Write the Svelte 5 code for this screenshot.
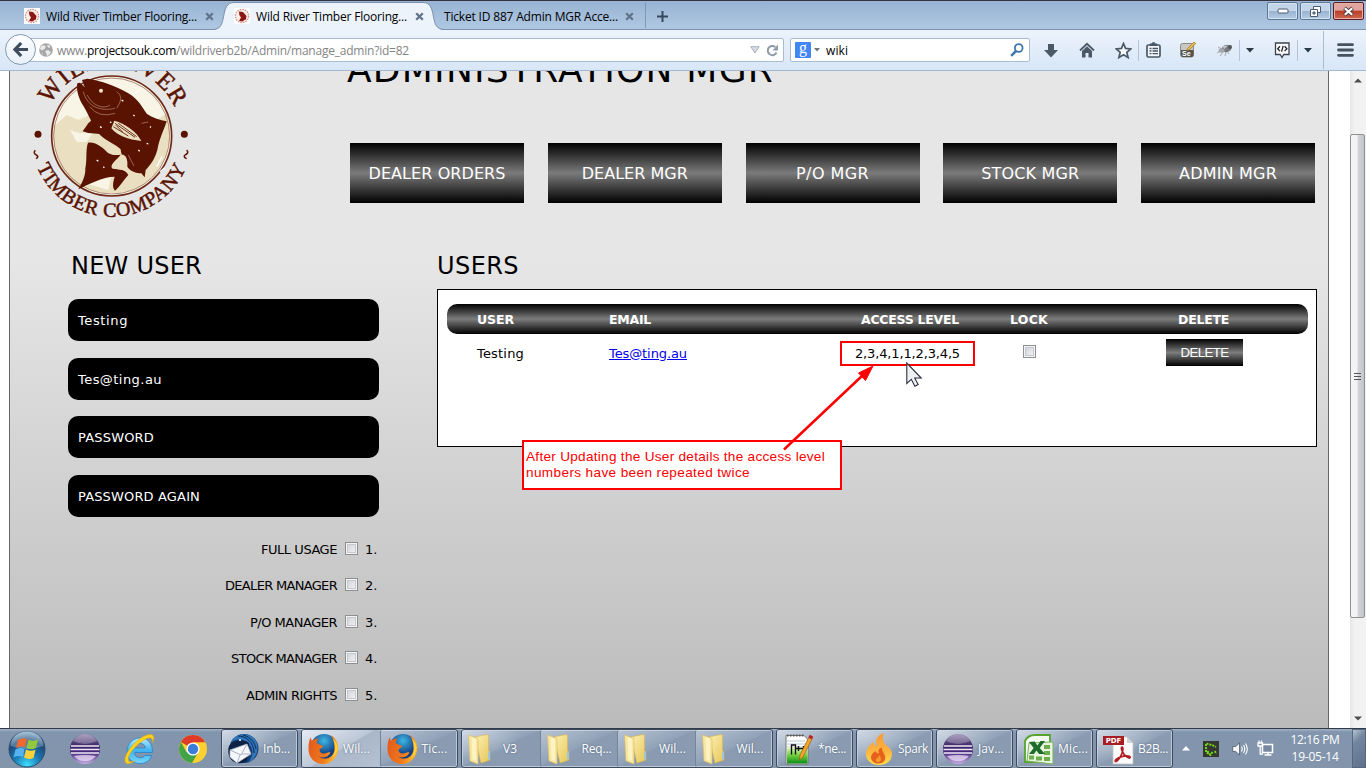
<script>
  // Spreads letters so that a label takes exactly the given width.
  function fit(node, width) {
    node.style.letterSpacing = '0px';
    const natural = node.getBoundingClientRect().width;
    const count = node.textContent.length;
    node.style.letterSpacing = (width - natural) / count + 'px';
  }

  const nav = [
    ['DEALER ORDERS', 137], ['DEALER MGR', 106], ['P/O MGR', 73], ['STOCK MGR', 98], ['ADMIN MGR', 98]
  ];
  const fields = [['Testing', 50], ['Tes@ting.au', 84], ['PASSWORD', 76], ['PASSWORD AGAIN', 122]];
  const rights = [['FULL USAGE', 76], ['DEALER MANAGER', 112], ['P/O MANAGER', 87], ['STOCK MANAGER', 106], ['ADMIN RIGHTS', 91]];
  const groups = [
    [{ icon: 'mail', label: 'Inb...', w: 27, lit: false }],
    [{ icon: 'fox', label: 'Wil...', w: 27, lit: true }, { icon: 'fox', label: 'Tic...', w: 26 }],
    [
      { icon: 'folder', label: 'V3', w: 14 }, { icon: 'folder', label: 'Req...', w: 30 },
      { icon: 'folder', label: 'Wil...', w: 27 }, { icon: 'folder', label: 'Wil...', w: 27 }
    ],
    [{ icon: 'note', label: '*ne...', w: 28 }],
    [{ icon: 'spark', label: 'Spark', w: 30 }],
    [{ icon: 'eclipse', label: 'Jav...', w: 26 }],
    [{ icon: 'excel', label: 'Mic...', w: 30 }],
    [{ icon: 'pdf', label: 'B2B...', w: 30 }]
  ];
</script>

{#snippet favicon()}
  <svg class="fav" width="16" height="16" viewBox="0 0 16 16">
    <rect width="16" height="16" fill="#fff" />
    <circle cx="8" cy="8" r="6.6" fill="#f8efe9" stroke="#d49a92" stroke-width="1.4" stroke-dasharray="1.6 1" />
    <path d="M5 3.500 9 4l3.500 4-.6 3.500-1.500.5-2 1.500L5 13l2-3.500L5.300 7z" fill="#8d1612" />
  </svg>
{/snippet}

{#snippet closeX()}
  <svg class="x" width="9" height="9" viewBox="0 0 9 9"><path d="M1.200 1.200 7.800 7.800M7.800 1.200 1.200 7.800" stroke="#60738a" stroke-width="2.300" /></svg>
{/snippet}

{#snippet caret()}
  <svg width="8" height="5" viewBox="0 0 8 5"><path d="M0 0h8L4 4.600z" fill="#2a3a47" /></svg>
{/snippet}

{#snippet appIcon(name)}
  <svg class="app" width="32" height="32" viewBox="0 0 32 32">
    {#if name === 'eclipse'}
      <circle cx="16" cy="16" r="15" fill="url(#gEcl)" />
      <path d="M4 8A14 14 0 0 1 28 8Q16 14 4 8z" fill="#fff" opacity=".25" />
      <path d="M2 13h28M1.500 16.500h29M2 20h28" stroke="#efeaf8" stroke-width="1.500" />
      <path d="M5 23Q16 21 27 23A14 14 0 0 1 5 23z" fill="#e9dff7" opacity=".75" />
    {:else if name === 'ie'}
      <path d="M29.500 19.500H11.500C12 23 14 24.800 17.300 24.800c2.200 0 3.500-.8 4.400-2.300h7C27 27.500 23 30.500 17 30.500 9.500 30.500 4 25.400 4 18.200S9.800 5 17 5C25 5 30 11 29.500 19.500zM11.700 15h10.600c-.4-3-2.200-4.600-5.200-4.600S12.400 12 11.700 15z" fill="url(#gIe)" stroke="#2384c6" stroke-width=".8" />
      <path d="M3 30C-2 25 12 5 25 1.800c7-1.600 6.500 4 4.500 8 .7-4-1-6-5-4.500C15 9 3.500 22 5.500 27.500c1 2.300 4 1.500 6.500.3C8 30.500 4.500 31.500 3 30z" fill="#ffd21c" stroke="#e3a900" stroke-width=".5" />
    {:else if name === 'chrome'}
      <circle cx="16" cy="16" r="14" fill="#fcd02f" />
      <path d="M16 16 3.900 9A14 14 0 0 1 28.200 9.200H16z" fill="#de3b2b" />
      <path d="M3.900 9A14 14 0 0 0 15 30l6.200-10.500L16 16 9.500 19z" fill="#42a446" />
      <circle cx="16" cy="16" r="6.600" fill="#fff" /><circle cx="16" cy="16" r="5.200" fill="#3b7ddb" />
    {:else if name === 'mail'}
      <circle cx="17" cy="15.500" r="14.500" fill="#173c72" />
      <path d="M4 9C9-1 24-1 29 8c4 9 0 18-8 22 5-7 6-13 1-19C18 6 11 5 4 9z" fill="#2f75b7" />
      <path d="M11 3c8 0 16 6 16 17M16 2c8 2 12 8 13 14" stroke="#0e2b5c" stroke-width="1" fill="none" />
      <path d="M2 13c4-6 14-7 20-3l-2 18c-8 5-16 1-18-5-1-4-1-7 0-10z" fill="#0f2346" />
      <path d="m3 17 17-6 4 10-14 9-7-6z" fill="#f6f7fa" stroke="#b9bfcc" stroke-width=".7" />
      <path d="m3 17 11 5 6-11M10 30l3-8M24 21l-9 0" stroke="#aab2c2" stroke-width="1" fill="none" />
      <circle cx="13" cy="7" r="1" fill="#fff" />
    {:else if name === 'fox'}
      <circle cx="17" cy="14.500" r="13.500" fill="url(#gFoxBlue)" />
      <path d="M24 2c6 4 8 10 7 16-2 9-9 13.500-16 13C7 30.500 1.500 24 1.500 16c0-5 .5-8 2-11.500L5 8c2-2 4-2.500 6-2.500C10 7.500 9.500 9 10 10.500l6 2.500c-.5 2-3 2.500-3.500 3.500 0 3 2 4.500 5 4 3-.5 4-1.500 6-1-2 5-9 6.500-13 3 6 6 17 3 17-7 0-5-1-9-3.500-13.500z" fill="url(#gFox)" />
      <path d="M26 6c3 5 4 14-2 19 7-3 9-13 2-19z" fill="#ffd83a" />
    {:else if name === 'folder'}
      <path d="m8 4 12-2.500 1.500 1V18L23 19v8l-9 3z" fill="url(#gFolder)" stroke="#d9b74e" stroke-width=".6" />
      <path d="m1.500 2 9.500 3.500V31L3 28z" fill="#f7e6a0" stroke="#dcbf62" stroke-width=".7" />
      <path d="m4.500 4 4.500 2v22l-3.500-1.500z" fill="#fdf3c2" />
      <path d="M22 19v7.500" stroke="#8fc6f0" stroke-width="1.700" />
    {:else if name === 'note'}
      <path d="M4 2.500h18l4 4v24.500H4z" fill="#fff" stroke="#777" />
      <path d="M5 8h18M5 11h20M5 14h20" stroke="#b6c7d6" stroke-width="1" />
      <rect x="5" y="14" width="20.500" height="16.500" fill="url(#gNote)" />
      <path d="M5 2.500h17" stroke="#555" stroke-width="2" stroke-dasharray="1.500 1.500" />
      <path d="M9.500 21.500V12h4v9.500M14 15.500h5M16.500 13v5M19 15.500h5M21.500 13v5" stroke="#111" stroke-width="1.400" fill="none" />
      <path d="m28 2 3 2-10 20-3.500 3L18 22z" fill="#f0a52b" stroke="#9a5c14" stroke-width=".7" /><path d="m28 2 3 1.500-1.500 3-3-2z" fill="#b72036" />
    {:else if name === 'spark'}
      <path d="M22 0C13 3 13.500 9 15 14c-2-1-3-3-3.500-5-4.500 3-8 8-7.500 13C4.500 28 10 32 17 32s13-4 13-11c0-6-5-7-7.500-11C20.500 7 20.500 4 22 0z" fill="url(#gSpark)" />
      <path d="M20 14.500c-4 1-4 4-3 6-2 0-3-1-3.500-2.500-3 2-5 4.500-4.500 7.500 1 3.500 4.500 5.500 8.500 5 4-.5 6.500-3.500 5.500-7.500-.7-3-3-4-3-8.500z" fill="#e8611c" />
      <path d="M17 22c0 3-4 3-3 6 1 2 5 1 5-1.500 0-2-1-3-2-4.500z" fill="#f39b2d" />
    {:else if name === 'excel'}
      <path d="M3 8Q6 2 13 2h15v27H3z" fill="#f5faf0" stroke="#57a332" stroke-width="1.800" />
      <path d="M7 10 31 9v22L5 28z" fill="#e9f4e1" stroke="#79b35b" />
      <path d="M22 12h6v4h-6zM22 18h6v4h-6zM22 24h6v4h-6zM14 23.500h6v4h-6zM7 22.500h5v4H7z" fill="#6cae4b" />
      <path d="m7 9 5.500-.5 3 4 3-4.500 4.500 0-5.300 7L23 21h-6l-2.600-3.500L12 21H7l4.700-6z" fill="#1c6b2b" />
    {:else}
      <path d="M11 4h14l6 6v21H11z" fill="#fbfbfb" stroke="#c2c2c2" stroke-width=".8" /><path d="m25 4 6 6h-6z" fill="#cfd3d6" />
      <rect x="1" y="3" width="21" height="9" fill="#a81c23" />
      <text x="11.500" y="10" class="pdftext">PDF</text>
      <path d="M20 14c1.500 0 1 4-.5 7.500C18 25 15 29 13.500 28.500c-1.700-1 3-4.500 8-5.300 4-.6 7 0 6.700 1.300-.6 1.600-4.500-.6-6.700-4C20 18 18.500 14.500 20 14z" fill="none" stroke="#b11f24" stroke-width="1.700" />
    {/if}
  </svg>
{/snippet}

<svg class="defs" width="0" height="0">
  <defs>
    <linearGradient id="gEcl" x2="0" y2="1"><stop offset="0" stop-color="#9283ab" /><stop offset=".4" stop-color="#3a2464" /><stop offset=".62" stop-color="#48277c" /><stop offset="1" stop-color="#c6aee4" /></linearGradient>
    <linearGradient id="gIe" x2="0" y2="1"><stop offset="0" stop-color="#b8ecff" /><stop offset=".5" stop-color="#3fb0ef" /><stop offset="1" stop-color="#79d7fb" /></linearGradient>
    <radialGradient id="gFoxBlue" cx=".5" cy=".25"><stop offset="0" stop-color="#3db7e4" /><stop offset="1" stop-color="#153f83" /></radialGradient>
    <linearGradient id="gFox" x2="1" y2=".3"><stop offset="0" stop-color="#e3561b" /><stop offset=".7" stop-color="#ef7b1d" /><stop offset="1" stop-color="#fcb22b" /></linearGradient>
    <linearGradient id="gFolder" x2="1" y2="1"><stop offset="0" stop-color="#fbf0b5" /><stop offset="1" stop-color="#e7c656" /></linearGradient>
    <linearGradient id="gNote" x2="0" y2="1"><stop offset="0" stop-color="#e9fbd0" /><stop offset=".5" stop-color="#6fd13c" /><stop offset="1" stop-color="#0f8a1a" /></linearGradient>
    <linearGradient id="gSpark" x2="0" y2="1"><stop offset="0" stop-color="#f79a35" /><stop offset=".6" stop-color="#fcb640" /><stop offset="1" stop-color="#fde04a" /></linearGradient>
    <radialGradient id="gOrb" cx=".5" cy=".95" r=".9"><stop offset="0" stop-color="#3fe0ff" /><stop offset=".4" stop-color="#1b7bb5" /><stop offset=".75" stop-color="#1d4a78" /><stop offset="1" stop-color="#7fa6c6" /></radialGradient>
  </defs>
</svg>

<div class="screen">
  <div class="tabs">
    <div class="tab first">{@render favicon()}<span class="t" use:fit={151}>Wild River Timber Flooring...</span>{@render closeX()}</div>
    <div class="tab active">
      <svg class="shape" width="232" height="28" viewBox="0 0 232 28">
        <path d="M0 28C8 27.500 9 22 10.500 15 12 6 14 .5 21 .5H210C217 .5 219 6 220.500 15 222 22 223 27.500 231 28z" fill="#edf3fb" />
        <path d="M0 27.500C8 27 9 22 10.500 15 12 6 14 .5 21 .5H210C217 .5 219 6 220.500 15 222 22 223 27 231 27.500" fill="none" stroke="#7a91ad" />
      </svg>
      {@render favicon()}<span class="t" use:fit={151}>Wild River Timber Flooring...</span>{@render closeX()}
    </div>
    <div class="tab last"><span class="t" use:fit={174}>Ticket ID 887 Admin MGR Acce...</span>{@render closeX()}</div>
    <svg class="plus" width="11" height="11" viewBox="0 0 11 11"><path d="M5.500 0v11M0 5.500h11" stroke="#37485a" stroke-width="2" /></svg>
    <div class="win">
      <div class="wb"><svg width="12" height="6" viewBox="0 0 12 6"><rect x="1" y="1" width="10" height="4" rx="1" fill="#fff" stroke="#4b5b70" /></svg></div>
      <div class="wb"><svg width="13" height="13" viewBox="0 0 13 13"><path d="M4.500 1.500h7v6h-7z" fill="#fff" stroke="#4b5b70" /><path d="M1.500 4.500h7v7h-7z" fill="#fff" stroke="#4b5b70" /><path d="M4 7h2v2H4z" fill="#8fa9c8" stroke="#4b5b70" /></svg></div>
      <div class="wb red"><svg width="13" height="11" viewBox="0 0 13 11"><path d="m2.500 2 8 7M10.500 2l-8 7" stroke="#4d3d46" stroke-width="4" /><path d="m2.800 2.200 7.400 6.600M10.200 2.200 2.800 8.800" stroke="#fff" stroke-width="2.200" /></svg></div>
    </div>
  </div>

  <div class="toolbar">
    <div class="back"><svg width="16" height="15" viewBox="0 0 16 15"><path d="M8.200 1 2 7.500l6.200 6.500M2.500 7.500H15" fill="none" stroke="#3f4e5f" stroke-width="3.200" /></svg></div>
    <div class="url">
      <svg width="14" height="14" viewBox="0 0 14 14"><circle cx="7" cy="7" r="6.800" fill="#a5a5a5" /><path d="M2 3c3-2 4 0 5 .5L5.500 6 3 7.500 1 6zM8.500 1.500l3 1.500-1 2-2-1zM6 8l3-1 3 2-2 3-2 1-1-3zM2 9l2 2v1z" fill="#e9e9e9" /></svg>
      <span class="addr"><span class="g" use:fit={30}>www.</span><b use:fit={89}>projectsouk.com</b><span class="g" use:fit={233}>/wildriverb2b/Admin/manage_admin?id=82</span></span>
      <svg width="10" height="8" viewBox="0 0 10 8"><path d="M.8.700h8.400L5 7z" fill="#d9dde3" stroke="#a9b1bb" /></svg>
      <svg class="reload" width="13" height="13" viewBox="0 0 13 13"><path d="M10.500 8.500A4.600 4.600 0 1 1 9.300 3" fill="none" stroke="#8d9aa8" stroke-width="2" /><path d="M12 .5v6H6.500z" fill="#8d9aa8" /></svg>
    </div>
    <div class="search">
      <span class="goog">g</span>
      <svg width="6" height="4" viewBox="0 0 6 4"><path d="M0 0h6L3 3.500z" fill="#6c7680" /></svg>
      <span class="q" use:fit={22}>wiki</span>
      <svg class="mag" width="14" height="14" viewBox="0 0 14 14"><circle cx="8.700" cy="5" r="3.900" fill="none" stroke="#3f78ac" stroke-width="1.800" /><path d="M6 8 1.200 12.800" stroke="#3f78ac" stroke-width="2.500" /></svg>
    </div>
    <div class="tools">
      <svg width="14" height="15" viewBox="0 0 14 15"><path d="M4 1h6v6h4l-7 7.500L0 7h4z" fill="#4b5966" /></svg>
      <svg width="16" height="16" viewBox="0 0 16 16"><path d="M1 8.500 8 1.800l7 6.700" fill="none" stroke="#4b5966" stroke-width="1.800" /><path d="m3 9 5-4.800L13 9v6.500H9.500V11h-3v4.500H3z" fill="#4b5966" /></svg>
      <svg width="17" height="17" viewBox="0 0 17 17"><path d="m8.500 1.500 2 4.900 5.300.5-4 3.400 1.300 5.200-4.600-2.700-4.600 2.700 1.300-5.200-4-3.400 5.300-.5z" fill="#f7fbff" stroke="#4b5966" stroke-width="1.700" /></svg>
      <i></i>
      <svg width="15" height="16" viewBox="0 0 15 16"><rect x="1" y="3" width="13" height="12" rx="1.500" fill="#f3f7fb" stroke="#4b5966" stroke-width="1.700" /><path d="M4 3.500V2h2a1.500 1.500 0 0 1 3 0h2v1.500z" fill="#4b5966" stroke="#4b5966" /><path d="M3.500 6.500h2M6.500 6.500h5.500M3.500 9h2M6.500 9h5.500M3.500 11.700h2M6.500 11.700h5.500" stroke="#4b5966" stroke-width="1.300" /></svg>
      <svg width="16" height="16" viewBox="0 0 16 16"><rect x=".5" y="1.500" width="13" height="13.500" rx="2" fill="#c9c7c1" stroke="#8c8a85" /><path d="M1 8h12.500v5a2 2 0 0 1-2 2H3a2 2 0 0 1-2-2z" fill="#55534f" /><text x="2" y="14" class="se">Se</text><path d="m14 0 1.800 1.500L9 8l-2.200.6L7.500 6.500z" fill="#efb84c" stroke="#8c6a2a" stroke-width=".6" /></svg>
      <svg width="17" height="14" viewBox="0 0 17 14"><path d="M1 10 5 8M4 13l3-4M9 13l1-4M13 11l-2-3M2 4l4 2M15 7l-3 0" stroke="#999" stroke-width=".8" /><ellipse cx="10.500" cy="5.500" rx="5" ry="3.600" fill="#777b80" transform="rotate(-15 10.500 5.500)" /><ellipse cx="5.500" cy="7.500" rx="3" ry="2.200" fill="#a5a9ad" /><circle cx="14" cy="4" r="2" fill="#50565c" /><path d="m6 3 6-.5L8.500 6z" fill="#c2c6ca" /></svg>
      <i></i>
      {@render caret()}
      <svg width="17" height="17" viewBox="0 0 17 17"><path d="M1.500 1h13.500v11.500H9.700L8 15.500l-1.800-3H1.500z" fill="#fdfdfd" stroke="#3a444e" stroke-width="1.300" /><path d="M6 4.300 3.700 6.700 6 9.100M10.600 4.300l2.300 2.400-2.300 2.400M9.200 3.800 7.600 9.700" fill="none" stroke="#1c2329" stroke-width="1.300" /></svg>
      <i></i>
      {@render caret()}
      <i class="tall"></i>
      <svg width="17" height="14" viewBox="0 0 17 14"><path d="M1.500 1.700h14M1.500 7h14M1.500 12.300h14" stroke="#46535f" stroke-width="2.800" stroke-linecap="round" /></svg>
    </div>
  </div>

  <div class="viewport">
    <main class="page">
      <header>
        <svg class="logo" width="230" height="159" viewBox="30 33 690 477">
          <defs>
            <path id="arcTop" d="M152 134A206 206 0 0 1 526 148" />
            <path id="arcBottom" d="M111 321A243 243 0 0 0 559 321" />
          </defs>
          <circle cx="335" cy="228" r="178" fill="#f8f4e6" />
          <path d="M160 200 200 165 235 180 270 165 380 230 470 180 500 160C525 240 500 330 420 380 370 405 270 415 205 350 175 320 155 250 160 200z" fill="#eadfc0" />
          <path d="M210 210l30 10 40-4-20 30-30 0zM255 370l80-30-10 50z" fill="#f8f4e6" />
          <circle cx="335" cy="228" r="180" fill="none" stroke="#6d2a18" stroke-width="5" />
          <circle cx="335" cy="228" r="174" fill="none" stroke="#8d5743" stroke-width="2" />
          <g fill="#5a1300">
            <path d="M232 70 240 68 254 82 246 60 262 56C300 62 345 75 385 100 415 118 425 140 441 162 460 175 480 180 500 184 492 210 478 235 472 270 464 300 448 318 437 330L434 352 424 340C408 340 392 335 383 322 376 300 362 285 362 268 345 250 310 240 292 215 275 190 262 155 245 130 236 112 228 90 232 70z" />
            <path d="M264 248C290 245 310 265 325 280 345 290 360 282 370 285 345 300 330 315 336 325 350 330 375 325 385 345 375 355 360 380 345 392 335 380 340 365 344 350 310 350 260 375 235 388 245 370 257 350 256 325 262 300 256 270 264 248z" />
            <path d="M278 178 265 190 248 214 265 219 300 222z" />
            <circle cx="114" cy="223" r="10.500" /><circle cx="553" cy="223" r="10.500" />
          </g>
          <path d="M362 284C378 282 384 300 382 318 376 330 355 330 337 325 333 310 350 300 362 284z" fill="#eadfc0" />
          <path d="M343 182C375 190 410 215 424 243 385 240 350 225 334 205z" fill="#eadfc0" />
          <path d="m345 190 60 42M340 200l45 28M355 190l55 40M348 196l20 20" stroke="#5a1300" stroke-width="2.500" />
          <path d="M250 95C262 140 300 155 345 145M262 105C275 135 310 150 330 135M270 140Q295 175 345 160M385 285Q395 305 402 318M425 190l20-4M350 95Q375 110 350 145" fill="none" stroke="#b98e7a" stroke-width="2" />
          <circle cx="303" cy="92" r="6" fill="#f0e4c8" />
          <path d="M300 200l5 3M400 165l4 3M440 250l5 2M450 200l3 2M290 300l5 4M310 320l3 3M330 185l4 3M415 270l4 4M365 120l5 4M398 105l22-16M470 320l16-30M480 335l14-12" stroke="#fff" stroke-width="4" />
          <path d="M106 271C98 279 106 283 109 285 116 289 114 293 108 296M560 270C568 278 560 282 557 284 550 288 552 292 560 296" fill="none" stroke="#5a1300" stroke-width="4.500" />
          <text class="ring" font-size="74"><textPath href="#arcTop" textLength="462">WILD RIVER</textPath></text>
          <text class="ring" font-size="60"><textPath href="#arcBottom" textLength="568">TIMBER COMPANY</textPath></text>
        </svg>
        <div class="head">
          <h1><span class="t" use:fit={427}>ADMINISTRATION MGR</span></h1>
          <nav>{#each nav as [label, w]}<a href="#top"><span class="t" use:fit={w}>{label}</span></a>{/each}</nav>
        </div>
      </header>

      <div class="columns">
        <section class="newuser">
          <h2><span class="t" use:fit={131}>NEW USER</span></h2>
          {#each fields as [label, w]}<div class="field"><span class="t" use:fit={w}>{label}</span></div>{/each}
          <div class="rights">
            {#each rights as [label, w], i}
              <div class="right"><span class="t" use:fit={w}>{label}</span><span class="box"></span><span class="num">{i + 1}.</span></div>
            {/each}
          </div>
        </section>

        <section class="users">
          <h2><span class="t" use:fit={82}>USERS</span></h2>
          <div class="panel">
            <div class="row th">
              <span><span class="t" use:fit={37}>USER</span></span><span><span class="t" use:fit={42}>EMAIL</span></span>
              <span class="c"><span class="t" use:fit={98}>ACCESS LEVEL</span></span><span class="c"><span class="t" use:fit={38}>LOCK</span></span><span class="c"><span class="t" use:fit={51}>DELETE</span></span>
            </div>
            <div class="row td">
              <span><span class="t" use:fit={47}>Testing</span></span><span><a class="t" href="#mail" use:fit={78}>Tes@ting.au</a></span>
              <span class="c levels"><span class="t" use:fit={105}>2,3,4,1,1,2,3,4,5</span></span><span class="c"><span class="box"></span></span><span class="c del"><button><span class="t" use:fit={48}>DELETE</span></button></span>
            </div>
            <div class="mark"></div>
            <div class="callout"><div class="t" use:fit={299}>After Updating the User details the access level</div><div class="t" use:fit={224}>numbers have been repeated twice</div></div>
            <svg class="arrow" width="110" height="100" viewBox="0 0 110 100"><path d="M13 90.500 92 16" stroke="#f00" stroke-width="2.500" /><path d="M102 7 94.500 21.500 87.500 14z" fill="#f00" stroke="#f00" /></svg>
            <svg class="cursor" width="17" height="26" viewBox="0 0 17 26"><path d="M.8 1v20.500l4.500-4.200 3.600 7 3.300-1.700-3.500-6.600h6.500z" fill="#f0f1f3" stroke="#2c2d3d" stroke-width="1.100" /></svg>
          </div>
        </section>
      </div>
    </main>
    <div class="scroll">
      <svg width="8" height="5" viewBox="0 0 8 5"><path d="M0 4.500h8L4 .5z" fill="#4d4d4d" /></svg>
      <div class="thumb"><i></i><i></i><i></i></div>
      <svg width="8" height="5" viewBox="0 0 8 5"><path d="M0 .5h8L4 4.500z" fill="#4d4d4d" /></svg>
    </div>
  </div>

  <div class="taskbar">
    <svg class="orb" width="38" height="38" viewBox="0 0 38 38">
      <circle cx="19" cy="19" r="18" fill="url(#gOrb)" stroke="#294e70" />
      <path d="M3 16A16 16 0 0 1 35 16Q19 22 3 16z" fill="#fff" opacity=".25" />
      <path d="M10 10q4.500-3 9-1L17 17.500q-4-2-9 .5z" fill="#ee6a31" /><path d="M20.500 9.500q4.500 2.500 9.500 0L28 18q-5 2.500-9.500 0z" fill="#91c83e" />
      <path d="M7.500 19.500q4.500-2.500 9-.8L15 27q-4.500-2-9.500.5z" fill="#56b3f0" /><path d="M18 19.500q4.500 2.500 9.500.2L25.500 28q-5 2-9.500-.5z" fill="#fdd13a" />
    </svg>
    <div class="pins">{@render appIcon('eclipse')}{@render appIcon('ie')}{@render appIcon('chrome')}</div>
    <div class="groups">
      {#each groups as group}
        <div class="group">
          {#each group as task}
            <div class="task" class:lit={task.lit}>{@render appIcon(task.icon)}<span class="lab"><span class="t" use:fit={task.w}>{task.label}</span></span></div>
          {/each}
        </div>
      {/each}
    </div>
    <div class="tray">
      <svg width="8" height="5" viewBox="0 0 8 5"><path d="M4 0 8 4.500H0z" fill="#fff" /></svg>
      <svg width="16" height="16" viewBox="0 0 16 16"><rect width="16" height="16" fill="#343a32" /><path d="M3.500 2.500 9 4l4 2M3 3v8l4.500 3 2-3M7.500 14l-4-5M12 10l1 3" fill="none" stroke="#7be01a" stroke-width="1.800" stroke-dasharray="2 1" /></svg>
      <svg width="16" height="16" viewBox="0 0 16 16"><path d="M.700 5.500h3L7.500 2v12L3.700 10.500h-3z" fill="#f4f6f8" stroke="#3f4a58" stroke-width=".7" /><path d="M9.500 5.500q1.500 2.500 0 5M11.500 4q2.500 4 0 8M13.500 2.500q3.500 5.500 0 11" fill="none" stroke="#fff" stroke-width="1.100" /></svg>
      <svg width="17" height="17" viewBox="0 0 17 17"><path d="M5.500 4.500h10v8h-10z" fill="#7688a0" stroke="#fff" stroke-width="1.500" /><path d="M7.500 15h7M11 12.500V15" stroke="#fff" stroke-width="1.500" /><path d="M1 3v3h4.500V3zM2 .5v2.500M4.500 .5v2.500M3.200 6v8H6" fill="none" stroke="#fff" stroke-width="1.300" /></svg>
    </div>
    <div class="clock"><span class="t" use:fit={49}>12:16 PM</span><span class="t" use:fit={47}>19-05-14</span></div>
    <div class="peek"></div>
  </div>
</div>

<style>
  :global(body) { margin: 0; overflow: hidden; }
  .screen { width: 1366px; height: 768px; display: flex; flex-direction: column; overflow: hidden; font-family: "DejaVu Sans", Verdana, sans-serif; font-size: 13px; color: #000; background: #fff; }
  .screen * { box-sizing: border-box; }
  .defs { position: absolute; }
  svg { display: block; flex: none; }
  .t, .addr > *, .q { display: inline-block; white-space: pre; flex: none; }

  .tabs { height: 30px; flex: none; display: flex; align-items: center; border-top: 1px solid #34323a; border-bottom: 1px solid #7a93b0; background: linear-gradient(#98b3d3, #afc8e2); font: 12px "Open Sans", "Segoe UI", sans-serif; }
  .tab { height: 28px; display: flex; align-items: center; position: relative; padding-top: 2px; }
  .tab .fav { margin-right: 6px; }
  .tab > * { position: relative; }
  .first { width: 222px; padding-left: 24px; }
  .first .x, .active .x { margin-left: 8px; }
  .active { width: 222px; padding-left: 12px; }
  .active .shape { position: absolute; left: -9px; top: 1px; }
  .last { width: 202px; height: 26px; border-right: 1px solid #7f98b6; }
  .last .x { margin-left: 7px; }
  .plus { margin: 2px 0 0 11px; }
  .win { margin-left: auto; align-self: flex-start; display: flex; gap: 2px; padding: 1px 2px 0 0; }
  .wb { height: 18px; width: 31px; border: 1px solid #5c7695; border-radius: 2px; display: grid; place-items: center; background: linear-gradient(#c3d5e9 48%, #98b2d0 50%, #b5cbe3); box-shadow: inset 0 0 0 1px #d4e1ef; }
  .red { border-color: #5b1d25; background: linear-gradient(#e0a59c 45%, #bb3c24 50%, #cf6a53); box-shadow: inset 0 0 0 1px #e8afa4; }

  .toolbar { height: 41px; flex: none; display: flex; align-items: center; padding-bottom: 1px; border-bottom: 1px solid #a2b9d1; background: linear-gradient(#ecf3fc, #d8e6f6); font: 12px "Open Sans", "Segoe UI", sans-serif; }
  .back { width: 31px; height: 31px; margin: 0 -16px 0 5px; border: 1px solid #8399af; border-radius: 50%; background: linear-gradient(#fcfdff, #e8f0f9); z-index: 1; display: grid; place-items: center; flex: none; }
  .url { width: 764px; height: 24px; margin-top: 1px; border: 1px solid #a9bdd2; border-radius: 2px; background: #fff; display: flex; align-items: center; padding: 0 4px 0 18px; flex: none; }
  .url .addr { margin: 0 auto 0 4px; display: flex; }
  .g { color: #858585; }
  .url b { font-weight: 400; }
  .reload { margin-left: 6px; }
  .search { width: 240px; height: 24px; margin: 1px 14px 0 6px; border: 1px solid #a9bdd2; border-radius: 2px; background: #fff; display: flex; align-items: center; padding: 0 5px 0 4px; flex: none; }
  .goog { width: 16px; height: 16px; border-radius: 1px; background: #4285f4; color: #fff; font: 16px/12px "Liberation Serif", serif; text-align: center; margin-right: 3px; }
  .q { margin-left: 6px; }
  .mag { margin-left: auto; }
  .tools { flex: 1; display: grid; align-items: center; justify-items: start; padding-top: 1px; grid-template-columns: 35px 36px 23px 8px 34px 36px 23px 7px 28px 23px 7px 19px 14px 17px; }
  .tools i { width: 1px; height: 21px; background: #b4c4d6; }
  .tools .tall { height: 38px; background: #a9bdd2; }
  .se { font: bold 7px "Liberation Sans", sans-serif; fill: #fff; }

  .viewport { flex: 1; min-height: 0; display: flex; overflow: hidden; background: #fff; }
  .page { width: 1320px; margin: 0 21px 0 9px; flex: none; border: solid #666; border-width: 0 1px; background: linear-gradient(#e6e6e6 0, #e6e6e6 190px, #d4d4d4 380px, #bbb 657px); overflow: hidden; }
  header { display: flex; height: 180px; }
  .logo { width: 230px; height: 159px; }
  .ring { font-family: "Liberation Serif", serif; fill: #5a1300; stroke: #5a1300; stroke-width: 1.5; }
  .head { margin-left: 107px; width: 970px; }
  h1 { font-size: 36px; line-height: 42px; height: 42px; margin: -22px 0 52px; font-weight: 400; }
  nav { display: flex; justify-content: space-between; width: 965px; margin-left: 3px; }
  nav a { width: 174px; height: 60px; display: grid; place-items: center; color: #fff; font-size: 16px; text-decoration: none; background: linear-gradient(#000, #7b7b7b 50%, #000); }
  .columns { display: flex; }
  h2 { font-size: 24px; line-height: 30px; margin: 0 0 18px; font-weight: 400; }
  .newuser { width: 311px; margin-left: 58px; }
  .newuser h2 { margin-left: 3px; }
  .field { height: 42px; margin-bottom: 16.7px; border-radius: 10px; background: #000; color: #fff; padding: 1px 10px 0; display: flex; align-items: center; font-size: 13px; }
  .rights { margin-top: -3px; }
  .right { height: 36.6px; display: flex; align-items: center; justify-content: flex-end; }
  .num { width: 14px; margin-left: 7px; }
  .box { display: block; width: 13px; height: 13px; border: 1px solid #8e8f8f; background: linear-gradient(135deg, #cbcfd5, #f6f6f6); box-shadow: inset 0 0 0 1px #f4f4f4, inset 0 0 0 2px #c5c9cf; }
  .right .box { margin: -2px 0 0 8px; }
  .users { margin-left: 58px; }
  .users h2 { margin-bottom: 8px; }
  .panel { position: relative; width: 880px; height: 158px; border: 1px solid #000; background: #fff; padding: 14px 8px 0 9px; }
  .row { display: grid; grid-template-columns: 132px 231px 140px 98px 251px; padding-left: 30px; align-items: center; width: 861px; }
  .row > span { display: block; }
  .row .c { display: flex; justify-content: center; }
  .row .levels { padding-right: 5px; }
  .row .del { padding-left: 2px; }
  .th { height: 30px; border-radius: 10px; background: linear-gradient(#000, #7d7d7d 50%, #000); color: #fff; font-weight: 700; font-size: 12.5px; padding-top: 1px; }
  .td { height: 37px; padding-top: 1px; }
  .td a { color: #00e; }
  .td .box { margin-top: -4px; }
  button { width: 77px; height: 27px; border: 0; padding: 0; margin-top: -2px; background: linear-gradient(#000, #7d7d7d 50%, #000); color: #fff; font: 13.3px "Liberation Sans", Arial, sans-serif; }
  .mark { position: absolute; left: 402px; top: 51px; width: 135px; height: 25px; border: 2px solid #f00; }
  .callout { position: absolute; left: 84px; top: 150px; width: 320px; height: 50px; border: 2px solid #f00; background: #fff; color: #f00; font: 13.6px/16px "Liberation Sans", Arial, sans-serif; padding: 7px 0 0 2px; }
  .callout .t { display: table; }
  .arrow { position: absolute; left: 333px; top: 69px; }
  .cursor { position: absolute; left: 468px; top: 72px; }

  .scroll { width: 16px; display: flex; flex-direction: column; align-items: center; padding: 7px 0 7px; background: linear-gradient(90deg, #e6e6e6, #f2f2f2 30%, #f2f2f2); }
  .thumb { width: 15px; height: 484px; margin: 51px 1px auto 0; border: 1px solid #8f9093; border-radius: 2px; background: linear-gradient(90deg, #f3f3f3 45%, #d3d4d8 55%, #c4c5ca); display: flex; flex-direction: column; gap: 2px; justify-content: center; align-items: center; }
  .thumb i { width: 7px; height: 1px; background: #555; }

  .taskbar { height: 40px; flex: none; display: flex; align-items: center; border-top: 1px solid #313a48; background: linear-gradient(#a5b2c4, #8295ae 3px, #8295ab); font: 12px "Open Sans", "Segoe UI", sans-serif; color: #fff; }
  .orb { margin: 0 0 0 8px; }
  .pins { display: flex; gap: 22px; margin: 0 12px 0 23px; }
  .groups { display: flex; width: 952px; justify-content: space-between; height: 39px; }
  .group { display: flex; border: 1px solid #3c4a5e; border-radius: 3px; box-shadow: inset 0 0 0 1px #c4cedb; background: radial-gradient(ellipse 60px 30px at 0 0, #c3ccd8, #8c9db3); }
  .task { width: 77.5px; padding-left: 5px; display: flex; align-items: center; background: linear-gradient(155deg, rgba(220,228,238,.55), rgba(160,176,198,.25) 48%, rgba(120,138,162,.1) 50%); border-radius: 2px; }
  .group .task:only-child { width: 75px; }
  .task + .task { border-left: 1px solid #73859d; }
  .lit { background: linear-gradient(150deg, #e5eaf2, #bdc8d7 50%, #aab7c9 52%, #b5c1d1); }
  .lab { margin-left: 4px; text-shadow: 0 0 2px #52657d; }
  .pdftext { font: bold 7px "DejaVu Sans", sans-serif; fill: #fff; text-anchor: middle; }
  .tray { display: grid; grid-template-columns: 21px 29px 25px 17px; align-items: center; margin-left: 9px; }
  .clock { width: 50px; display: flex; flex-direction: column; align-items: center; line-height: 17px; margin-left: 16px; padding-bottom: 1px; }
  .peek { width: 14px; height: 39px; margin-left: auto; border: 1px solid #56687f; background: linear-gradient(135deg, #b8c4d3, #7387a0 30%, #5d718b); }
</style>
